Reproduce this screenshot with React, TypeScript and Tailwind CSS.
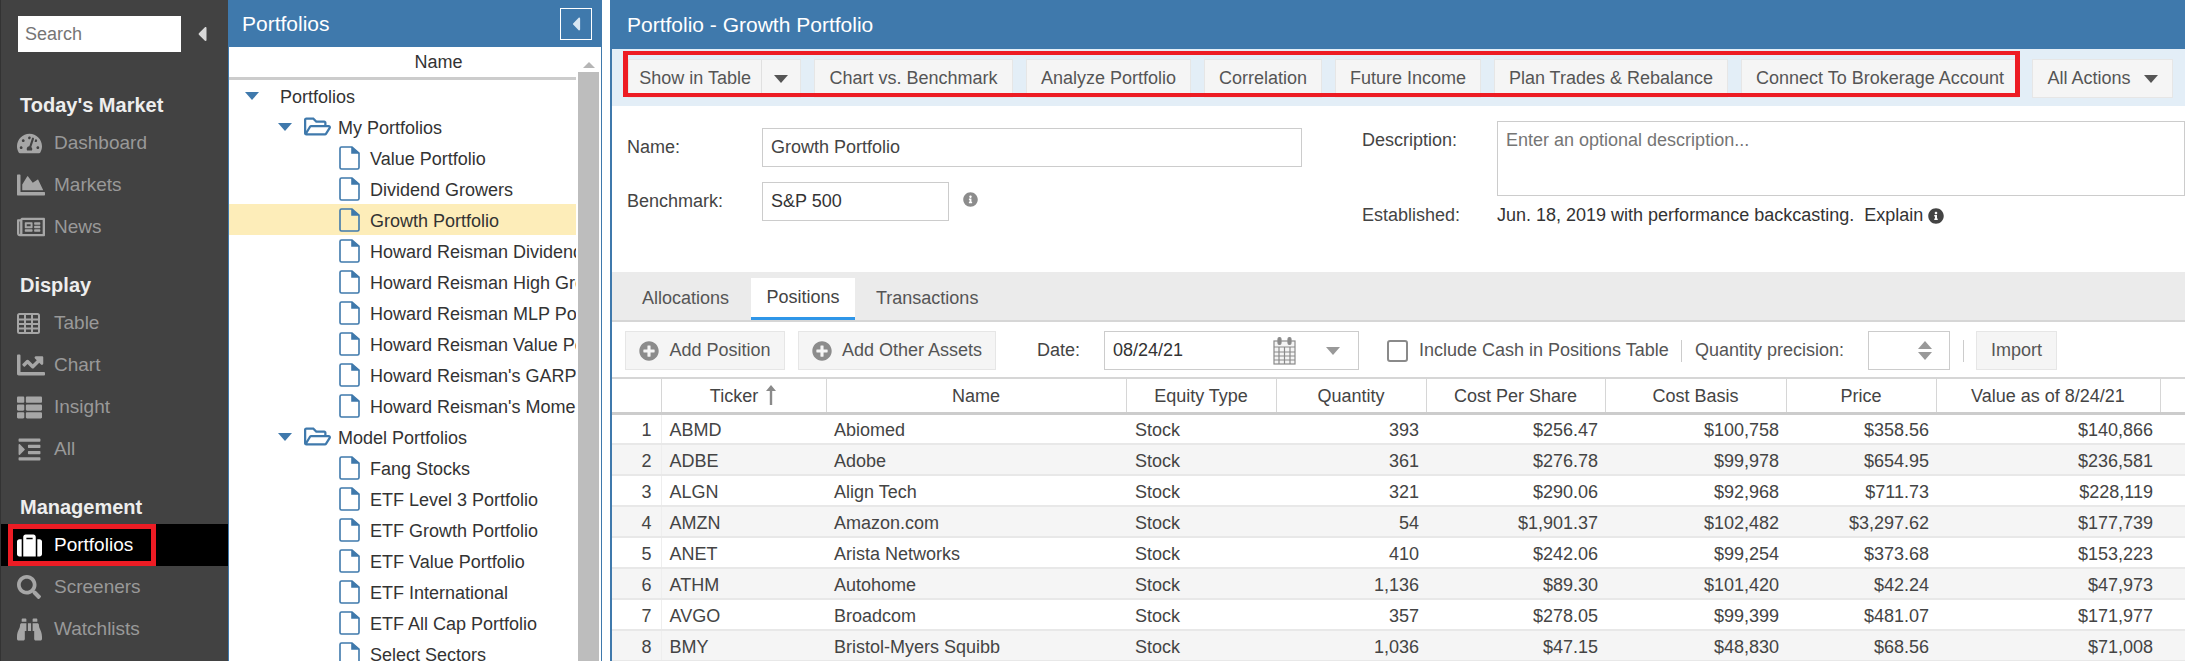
import type { ReactNode } from "react";
import {
  FaBinoculars,
  FaCaretLeft,
  FaChartArea,
  FaChartLine,
  FaIndent,
  FaInfoCircle,
  FaPlusCircle,
  FaRegFolderOpen,
  FaRegNewspaper,
  FaSearch,
  FaSuitcase,
  FaTachometerAlt,
  FaThList,
} from "react-icons/fa";

function TableIcon() {
  return (
    <svg width="23" height="21" viewBox="0 0 23 21" fill="none" stroke="#a6a6a6" strokeWidth="2">
      <rect x="1" y="1" width="21" height="19" rx="1.5" />
      <path d="M1 6.5h21M1 11h21M1 15.5h21M8 1v19M15 1v19" />
    </svg>
  );
}

const navGroups = [
  {
    title: "Today's Market",
    items: [
      { label: "Dashboard", icon: <FaTachometerAlt size={25} /> },
      { label: "Markets", icon: <FaChartArea size={28} /> },
      { label: "News", icon: <FaRegNewspaper size={28} /> },
    ],
  },
  {
    title: "Display",
    items: [
      { label: "Table", icon: <TableIcon /> },
      { label: "Chart", icon: <FaChartLine size={28} /> },
      { label: "Insight", icon: <FaThList size={25} /> },
      { label: "All", icon: <FaIndent size={25} /> },
    ],
  },
  {
    title: "Management",
    items: [
      { label: "Portfolios", icon: <FaSuitcase size={25} />, active: true },
      { label: "Screeners", icon: <FaSearch size={24} /> },
      { label: "Watchlists", icon: <FaBinoculars size={25} /> },
    ],
  },
];

const myPortfolios = [
  "Value Portfolio",
  "Dividend Growers",
  "Growth Portfolio",
  "Howard Reisman Dividend Portfolio",
  "Howard Reisman High Growth Portfolio",
  "Howard Reisman MLP Portfolio",
  "Howard Reisman Value Portfolio",
  "Howard Reisman's GARP Portfolio",
  "Howard Reisman's Momentum Portfolio",
];

const modelPortfolios = [
  "Fang Stocks",
  "ETF Level 3 Portfolio",
  "ETF Growth Portfolio",
  "ETF Value Portfolio",
  "ETF International",
  "ETF All Cap Portfolio",
  "Select Sectors",
];

const toolbarButtons = [
  { label: "Chart vs. Benchmark", width: "w-[199px]" },
  { label: "Analyze Portfolio", width: "w-[165px]" },
  { label: "Correlation", width: "w-[118px]" },
  { label: "Future Income", width: "w-[146px]" },
  { label: "Plan Trades & Rebalance", width: "w-[234px]" },
  { label: "Connect To Brokerage Account", width: "w-[278px]" },
];

const columns = [
  { label: "", width: "w-[49px]" },
  { label: "Ticker", width: "w-[165px]" },
  { label: "Name", width: "w-[300px]" },
  { label: "Equity Type", width: "w-[150px]" },
  { label: "Quantity", width: "w-[150px]" },
  { label: "Cost Per Share", width: "w-[179px]" },
  { label: "Cost Basis", width: "w-[181px]" },
  { label: "Price", width: "w-[150px]" },
  { label: "Value as of 8/24/21", width: "w-[224px]" },
  { label: "", width: "" },
];

const positions = [
  ["ABMD", "Abiomed", "393", "$256.47", "$100,758", "$358.56", "$140,866"],
  ["ADBE", "Adobe", "361", "$276.78", "$99,978", "$654.95", "$236,581"],
  ["ALGN", "Align Tech", "321", "$290.06", "$92,968", "$711.73", "$228,119"],
  ["AMZN", "Amazon.com", "54", "$1,901.37", "$102,482", "$3,297.62", "$177,739"],
  ["ANET", "Arista Networks", "410", "$242.06", "$99,254", "$373.68", "$153,223"],
  ["ATHM", "Autohome", "1,136", "$89.30", "$101,420", "$42.24", "$47,973"],
  ["AVGO", "Broadcom", "357", "$278.05", "$99,399", "$481.07", "$171,977"],
  ["BMY", "Bristol-Myers Squibb", "1,036", "$47.15", "$48,830", "$68.56", "$71,008"],
];

function FileIcon() {
  return (
    <svg width="21" height="24" viewBox="0 0 21 24" fill="none" stroke="#3f79ac" strokeWidth="1.6" className="shrink-0">
      <path d="M13 1H2.5A1.5 1.5 0 0 0 1 2.5v19A1.5 1.5 0 0 0 2.5 23h16a1.5 1.5 0 0 0 1.5-1.5V7L13 1Z" />
      <path d="M13 1v6h7" fill="#3f79ac" />
    </svg>
  );
}

function CalendarIcon() {
  return (
    <svg width="23" height="30" viewBox="0 0 23 30" fill="none" stroke="#8a8a8a" strokeWidth="1.2">
      <rect x="1" y="5" width="21" height="23" fill="#f4f4f4" />
      <path d="M1 11h21M1 16h21M1 20h21M1 24h21M6 11v17M11.5 11v17M17 11v17" />
      <rect x="5" y="1.5" width="3" height="7" rx="1.5" fill="#8a8a8a" />
      <rect x="15" y="1.5" width="3" height="7" rx="1.5" fill="#8a8a8a" />
    </svg>
  );
}

function Sidebar() {
  return (
    <aside className="relative w-[228px] shrink-0 border-l border-[#333] bg-[#424242]">
      <div className="mt-[16px] flex h-[36px] items-center pl-[17px]">
        <div className="flex h-[36px] w-[163px] items-center bg-white pl-[7px] text-[18px] text-[#757575]">Search</div>
        <FaCaretLeft size={24} className="ml-[9px] text-[#d8d8d8]" />
      </div>
      <div className="mt-[36px]">
        {navGroups.map((group) => (
          <div key={group.title} className="mb-[20px]">
            <div className="flex h-[34px] items-center pl-[19px] text-[20px] font-bold text-[#eeeeee]">{group.title}</div>
            {group.items.map((item) => (
              <div
                key={item.label}
                className={`flex h-[42px] items-center text-[19px] ${item.active ? "bg-black text-white" : "text-[#999999]"}`}
              >
                <span className={`flex w-[53px] pl-[16px] ${item.active ? "text-white" : "text-[#a6a6a6]"}`}>{item.icon}</span>
                {item.label}
              </div>
            ))}
          </div>
        ))}
      </div>
      <div className="pointer-events-none absolute left-[7px] top-[524px] h-[42px] w-[148px] border-[5px] border-[#ed1c24]" />
    </aside>
  );
}

function TreeRow({ label, highlight }: { label: string; highlight?: boolean }) {
  return (
    <div className={`flex h-[31px] items-center gap-[10px] overflow-hidden whitespace-nowrap pl-[110px] ${highlight ? "bg-[#fdedb9]" : ""}`}>
      <FileIcon />
      <span className="pt-[3px]">{label}</span>
    </div>
  );
}

function Caret({ className }: { className: string }) {
  return <span className={`h-0 w-0 shrink-0 border-x-[7px] border-t-[8px] border-x-transparent ${className}`} />;
}

function FolderRow({ label }: { label: string }) {
  return (
    <div className="flex h-[31px] items-center whitespace-nowrap pl-[49px]">
      <Caret className="border-t-[#3f79ac]" />
      <FaRegFolderOpen size={27} className="ml-[12px] mr-[7px] text-[#3f79ac]" />
      <span className="pt-[3px]">{label}</span>
    </div>
  );
}

function TreePanel() {
  return (
    <section className="flex w-[374px] shrink-0 flex-col border-x border-[#3f79ac]">
      <div className="flex h-[47px] shrink-0 items-center justify-between bg-[#3f79ac] pl-[13px] pr-[9px] text-[21px] text-white">
        Portfolios
        <span className="flex h-[32px] w-[32px] items-center justify-center border border-white">
          <FaCaretLeft size={22} className="text-[#d8e6f2]" />
        </span>
      </div>
      <div className="flex min-h-0 flex-1">
        <div className="min-w-0 flex-1 text-[18px] leading-[22px] text-[#333]">
          <div className="flex h-[33px] items-center justify-center border-b-[3px] border-[#cccccc] pl-[72px]">Name</div>
          <div className="flex h-[31px] items-center whitespace-nowrap pl-[16px]">
            <Caret className="border-t-[#3f79ac]" />
            <span className="ml-[21px] pt-[3px]">Portfolios</span>
          </div>
          <FolderRow label="My Portfolios" />
          {myPortfolios.map((name) => (
            <TreeRow key={name} label={name} highlight={name === "Growth Portfolio"} />
          ))}
          <FolderRow label="Model Portfolios" />
          {modelPortfolios.map((name) => (
            <TreeRow key={name} label={name} />
          ))}
        </div>
        <div className="flex w-[25px] shrink-0 flex-col">
          <div className="flex h-[25px] items-center justify-center pt-[10px]">
            <span className="h-0 w-0 border-x-[6px] border-b-[6px] border-x-transparent border-b-[#b5b5b5]" />
          </div>
          <div className="ml-[2px] mr-[2px] flex-1 bg-[#bdbdbd]" />
        </div>
      </div>
    </section>
  );
}

function GrayButton({ children, className }: { children: ReactNode; className: string }) {
  return (
    <div className={`flex h-[39px] shrink-0 items-center justify-center border border-[#e6e6e6] bg-[#f5f5f5] text-[18px] text-[#555] ${className}`}>
      {children}
    </div>
  );
}

function ActionBar() {
  return (
    <div className="relative flex h-[57px] shrink-0 items-start gap-[13px] whitespace-nowrap bg-[#e3eef7] pl-[16px] pt-[10px]">
      <GrayButton className="w-[173px]">
        <span className="flex h-full w-[135px] items-center justify-center border-r border-[#e0e0e0]">Show in Table</span>
        <span className="flex w-[38px] justify-center">
          <Caret className="border-t-[#555]" />
        </span>
      </GrayButton>
      {toolbarButtons.map((button) => (
        <GrayButton key={button.label} className={button.width}>
          {button.label}
        </GrayButton>
      ))}
      <GrayButton className="w-[141px] gap-[13px]">
        All Actions
        <Caret className="border-t-[#555]" />
      </GrayButton>
      <div className="pointer-events-none absolute left-[11px] top-[2px] h-[46px] w-[1397px] border-x-[5px] border-y-[4px] border-[#ed1c24]" />
    </div>
  );
}

function DetailsForm() {
  return (
    <div className="flex h-[166px] shrink-0 text-[18px] text-[#444]">
      <div className="w-[750px] pl-[15px] pt-[22px]">
        <div className="flex h-[39px] items-center">
          <span className="w-[135px]">Name:</span>
          <span className="flex h-[39px] w-[540px] items-center border border-[#cccccc] pl-[8px]">Growth Portfolio</span>
        </div>
        <div className="mt-[15px] flex h-[39px] items-center">
          <span className="w-[135px]">Benchmark:</span>
          <span className="flex h-[39px] w-[187px] items-center border border-[#cccccc] pl-[8px] text-[#333]">S&amp;P 500</span>
          <FaInfoCircle size={15} className="-mt-[5px] ml-[14px] text-[#8c8c8c]" />
        </div>
      </div>
      <div className="min-w-0 flex-1 pt-[15px]">
        <div className="flex h-[75px]">
          <span className="w-[135px] pt-[6px]">Description:</span>
          <div className="flex-1 border border-[#cccccc] pl-[8px] pt-[5px] text-[#757575]">Enter an optional description...</div>
        </div>
        <div className="mt-[6px] flex h-[27px] items-center">
          <span className="w-[135px]">Established:</span>
          <span className="text-[#333]">Jun. 18, 2019 with performance backcasting.&nbsp; Explain</span>
          <FaInfoCircle size={16} className="ml-[5px] text-[#444]" />
        </div>
      </div>
    </div>
  );
}

function Tabs() {
  return (
    <div className="flex h-[50px] shrink-0 items-end border-b-[2px] border-[#d6d6d6] bg-[#ebebeb] pl-[30px] text-[18px] text-[#555]">
      <span className="flex h-[42px] w-[88px] items-center pb-[1px]">Allocations</span>
      <span className="ml-[21px] flex h-[42px] w-[104px] items-center justify-center border-b-[3px] border-[#2f96e8] bg-white text-[#444]">Positions</span>
      <span className="ml-[21px] flex h-[42px] items-center pb-[1px]">Transactions</span>
    </div>
  );
}

function PositionsToolbar() {
  return (
    <div className="flex h-[57px] shrink-0 items-center whitespace-nowrap border-b-[2px] border-[#d6d6d6] pl-[13px] pt-[2px] text-[18px] text-[#444]">
      <GrayButton className="w-[160px] gap-[10px]">
        <FaPlusCircle size={20} className="text-[#8c8c8c]" />
        Add Position
      </GrayButton>
      <GrayButton className="ml-[13px] w-[198px] gap-[10px]">
        <FaPlusCircle size={20} className="text-[#8c8c8c]" />
        Add Other Assets
      </GrayButton>
      <span className="ml-[41px] w-[43px]">Date:</span>
      <div className="ml-[24px] flex h-[39px] w-[255px] items-center border border-[#cccccc] pl-[8px] text-[#333]">
        <span className="flex-1">08/24/21</span>
        <CalendarIcon />
        <Caret className="ml-[30px] mr-[18px] border-t-[#999]" />
      </div>
      <span className="ml-[28px] h-[22px] w-[21px] rounded-[3px] border-2 border-[#8a8a8a]" />
      <span className="ml-[11px] w-[250px] text-[#555]">Include Cash in Positions Table</span>
      <span className="ml-[12px] h-[22px] w-px bg-[#cccccc]" />
      <span className="ml-[13px] w-[151px] text-[#555]">Quantity precision:</span>
      <div className="ml-[22px] flex h-[39px] w-[82px] flex-col items-center justify-center gap-[3px] border border-[#cccccc] pl-[32px]">
        <span className="h-0 w-0 border-x-[7px] border-b-[8px] border-x-transparent border-b-[#999]" />
        <span className="h-0 w-0 border-x-[7px] border-t-[8px] border-x-transparent border-t-[#999]" />
      </div>
      <span className="ml-[13px] h-[22px] w-px bg-[#cccccc]" />
      <GrayButton className="ml-[12px] w-[81px]">Import</GrayButton>
    </div>
  );
}

function PositionsTable() {
  const right = "pr-[7px] pt-[3px] text-right";
  return (
    <table className="w-full table-fixed border-collapse text-[18px] leading-[22px] text-[#444]">
      <colgroup>
        {columns.map((col, i) => (
          <col key={i} className={col.width} />
        ))}
      </colgroup>
      <thead>
        <tr className="h-[34px] border-b-[3px] border-[#cccccc]">
          {columns.map((col, i) => (
            <th key={i} className="border-r border-[#d6d6d6] pt-[2px] font-normal last:border-r-0">
              {col.label}
              {col.label === "Ticker" && (
                <svg width="12" height="20" viewBox="0 0 12 20" className="ml-[7px] inline-block align-[-3px]" fill="#8a8a8a">
                  <path d="M6 0 11 6H7.2v14H4.8V6H1Z" />
                </svg>
              )}
            </th>
          ))}
        </tr>
      </thead>
      <tbody>
        {positions.map((row, i) => (
          <tr key={row[0]} className={`h-[31px] border-b-[2px] border-[#e8e8e8] ${i % 2 === 1 ? "bg-[#f5f5f5]" : "bg-white"}`}>
            <td className="border-r border-[#eeeeee] pr-[9px] pt-[3px] text-right">{i + 1}</td>
            <td className="pl-[8px] pt-[3px]">{row[0]}</td>
            <td className="pl-[8px] pt-[3px]">{row[1]}</td>
            <td className="pl-[9px] pt-[3px]">Stock</td>
            {row.slice(2).map((value, j) => (
              <td key={j} className={right}>
                {value}
              </td>
            ))}
            <td />
          </tr>
        ))}
      </tbody>
    </table>
  );
}

export default function App() {
  return (
    <div className="flex h-[661px] w-[2185px] overflow-hidden bg-white font-['Liberation_Sans',Arial,sans-serif]">
      <Sidebar />
      <TreePanel />
      <div className="w-[8px] shrink-0" />
      <main className="flex min-w-0 flex-1 flex-col border-l-2 border-[#3f79ac]">
        <div className="flex h-[49px] shrink-0 items-center bg-[#3f79ac] pl-[15px] text-[21px] text-white">Portfolio - Growth Portfolio</div>
        <ActionBar />
        <DetailsForm />
        <Tabs />
        <PositionsToolbar />
        <PositionsTable />
      </main>
    </div>
  );
}
